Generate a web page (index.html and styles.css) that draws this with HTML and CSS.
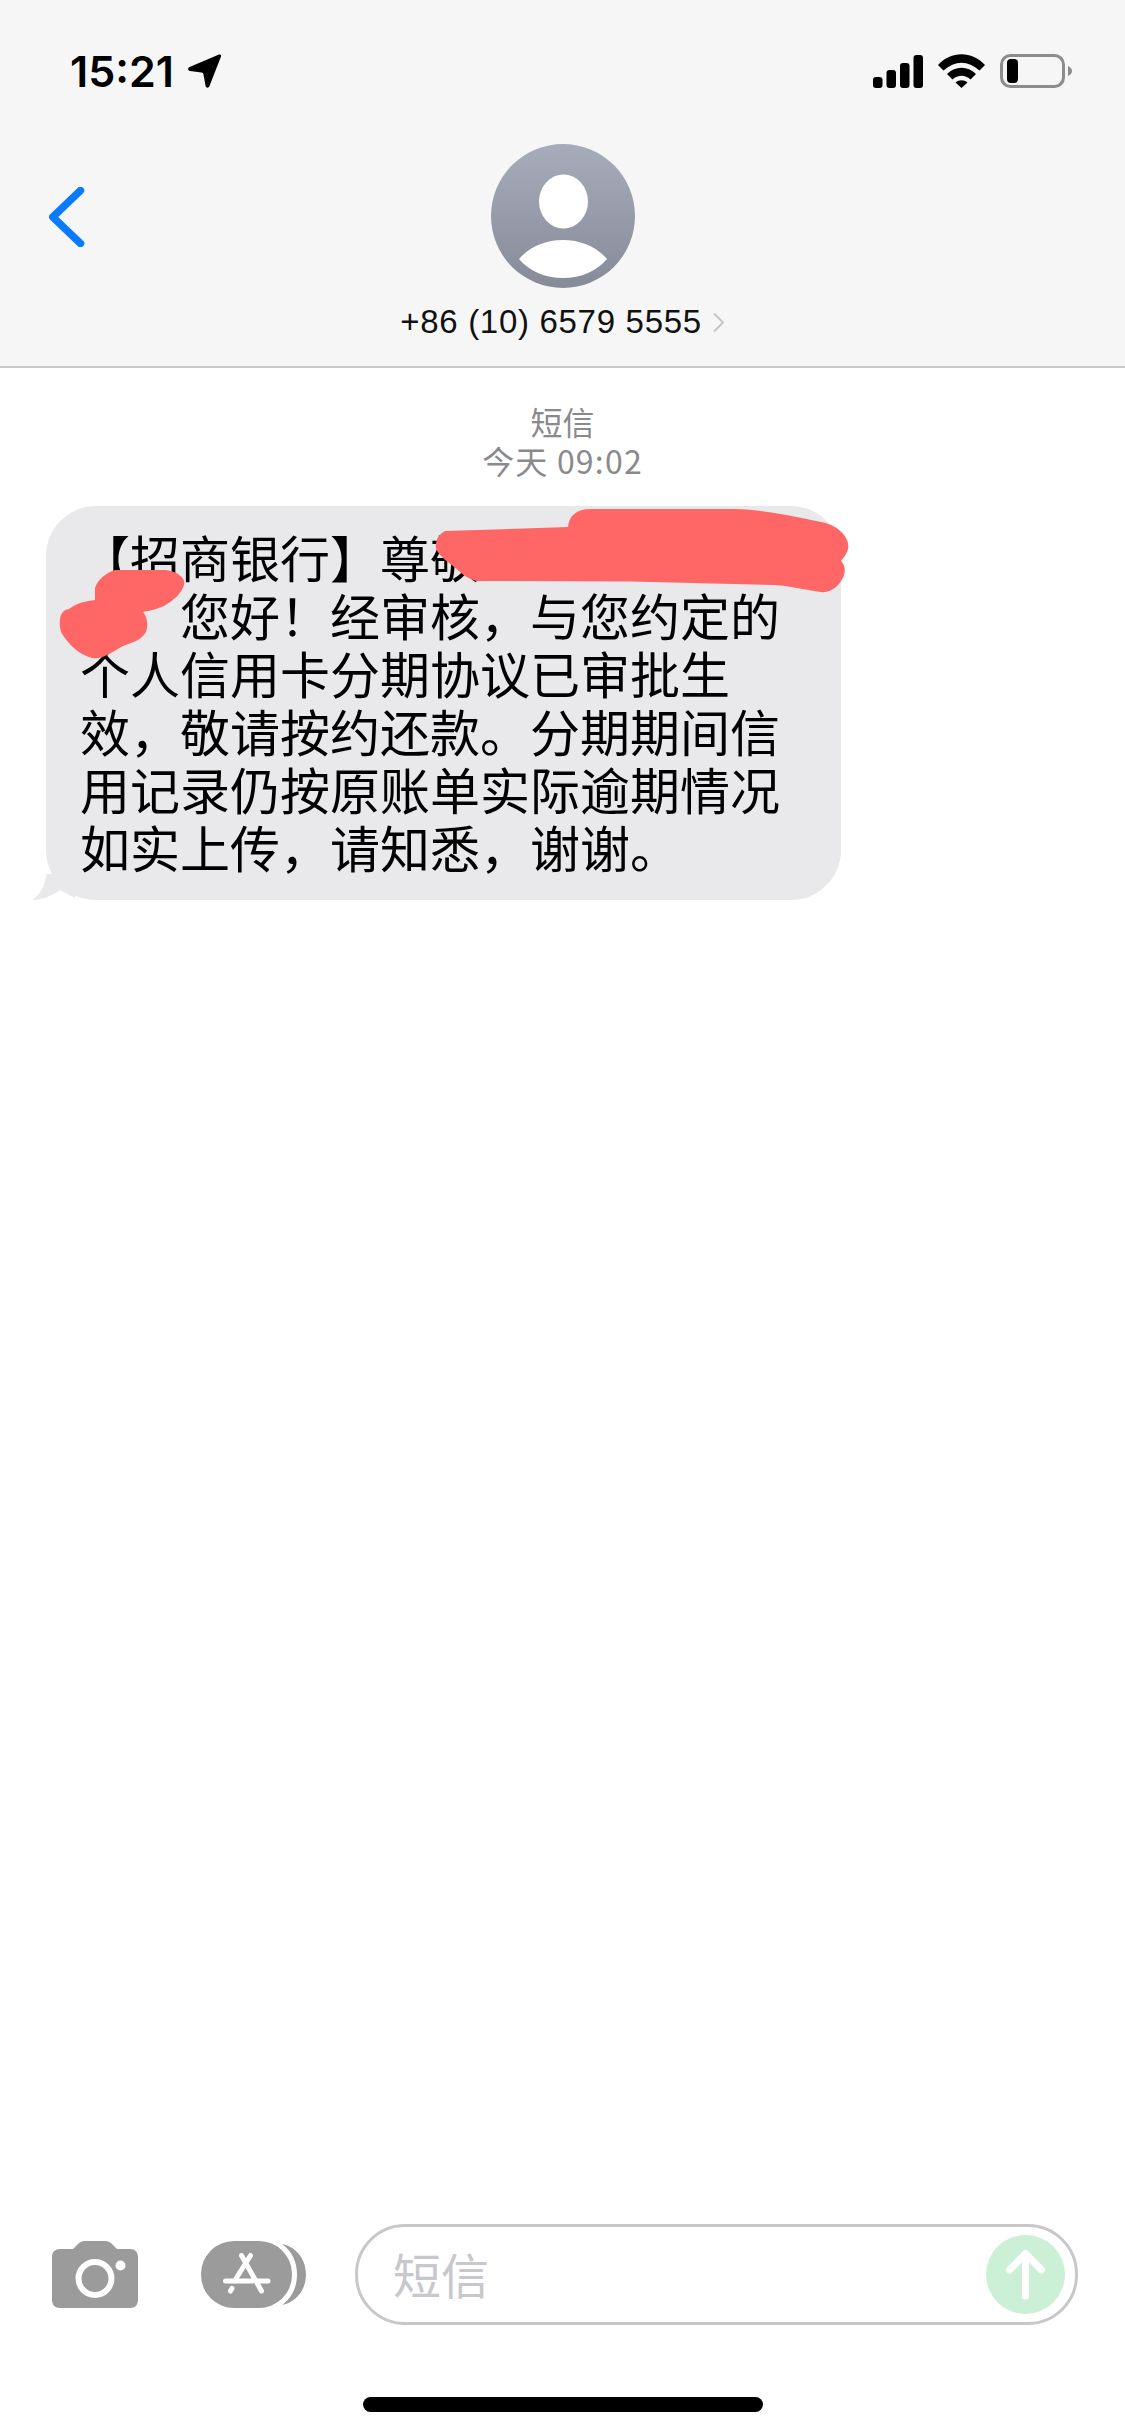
FILE: index.html
```html
<!DOCTYPE html>
<html lang="zh-CN">
<head>
<meta charset="utf-8">
<title>短信</title>
<link rel="stylesheet" href="styles.css">
</head>
<body>
<div class="screen">
  <header class="header">
    <div class="status">
      <div class="status-left">
        <span class="time">15:21</span>
        <svg class="ico-loc" width="34" height="34" viewBox="0 0 34 34"><path d="M31 .5C32.5 0 33.5 1.2 33 2.5L21.5 32C20.8 34.2 18 34.2 17.6 32L15.5 20.5C15.3 19.4 14.7 18.8 13.5 18.6L2 17C-.3 16.5-.4 13.8 1.6 13Z"/></svg>
      </div>
      <div class="status-right">
        <svg width="50" height="33" viewBox="0 0 50 33"><rect x="0" y="22" width="9.5" height="11" rx="3"/><rect x="13.5" y="15" width="9.5" height="18" rx="3"/><rect x="27" y="8" width="9.5" height="25" rx="3"/><rect x="40.5" y="0" width="9.5" height="33" rx="3"/></svg>
        <svg width="47" height="34" viewBox="0 0 47 34"><path d="M0 11C13-3.5 34-3.5 47 11L41.5 16.5C30 6 17 6 5.5 16.5Z"/><path d="M9 20C17.5 11.5 29.5 11.5 38 20L32.5 25.5C27 20.5 20 20.5 14.5 25.5Z"/><path d="M17.5 28.5C21 25.5 26 25.5 29.5 28.5L23.5 34Z"/></svg>
        <svg width="72" height="34" viewBox="0 0 72 34"><rect class="bat-shell" x="1.5" y="1.5" width="62" height="31" rx="9"/><rect x="7" y="5" width="11" height="24" rx="4"/><path class="bat-nub" d="M68 12C70.5 13 72 15 72 17S70.5 21 68 22Z"/></svg>
      </div>
    </div>
    <div class="nav">
      <svg class="back" width="36" height="60" viewBox="0 0 36 60"><path d="M31.500 3.500L3.800 30L31.500 56.500"/></svg>
      <div class="contact">
        <svg class="avatar" width="144" height="144" viewBox="0 0 144 144">
          <defs><linearGradient id="av" x1="0" y1="0" x2="0" y2="1"><stop offset="0" stop-color="#a7acbb"/><stop offset="1" stop-color="#878b98"/></linearGradient></defs>
          <circle cx="72" cy="72" r="72" fill="url(#av)"/>
          <ellipse class="white" cx="72.500" cy="57.500" rx="24.500" ry="27"/>
          <path class="white" d="M28 115C38 103 54 96 72 96S106 103 116 115C106 127 90 134 72 134S38 127 28 115Z"/>
        </svg>
        <div class="phone">
          <span>+86 (10) 6579 5555</span>
          <svg class="chev" width="13" height="21" viewBox="0 0 13 21"><path d="M2 1.500L11 10.500L2 19.500"/></svg>
        </div>
      </div>
    </div>
  </header>

  <main class="thread">
    <div class="meta">
      <div>短信</div>
      <div class="meta-time">今天 09:02</div>
    </div>
    <div class="bubble">
      <svg class="tail" width="50" height="26" viewBox="0 0 50 26"><path d="M14 0C14 11 8 21 0 26C10 26 20 22 28 16L43 24L50 0Z"/></svg>
      【招商银行】尊敬<br><span class="hidden-name"></span>您好！经审核，与您约定的<br>个人信用卡分期协议已审批生<br>效，敬请按约还款。分期期间信<br>用记录仍按原账单实际逾期情况<br>如实上传，请知悉，谢谢。
      <svg class="redact" width="795" height="160" viewBox="0 0 795 160">
        <path d="M399 25L522 21C523 10 530 3 545 3L689 3C720 4 746 10 780 17C798 23 804 36 802 43C800 50 796 53 795 55C800 60 800 68 795 75C790 84 780 87 775 86C760 84 745 80 729 79L585 75.500L430 75C424 73 418 70 413 65C405 58 392 50 390 42C389 35 393 28 399 25Z"/>
        <path d="M49 82C52 73 60 67 69 64L120 64C134 66 140 74 138 79C135 88 128 94 118 100C108 104 102 105 97 106C102 112 102 120 100 126C95 134 88 136 77 140C66 146 56 154 46 152C32 148 22 138 15 126C12 114 14 104 23 103C32 96 42 95 49 94Z"/>
      </svg>
    </div>
  </main>

  <footer class="footer">
    <div class="composer">
      <svg class="ico-camera" width="86" height="67" viewBox="0 0 86 67">
        <path class="gray" d="M8 8H21L26 3C28 1 30 0 33 0H53C56 0 58 1 60 3L65 8H78C83 8 86 11 86 16V59C86 64 83 67 78 67H8C3 67 0 64 0 59V16C0 11 3 8 8 8Z"/>
        <circle class="ring" cx="43" cy="37.500" r="16.500"/>
        <circle class="white" cx="68.500" cy="24.500" r="5"/>
      </svg>
      <svg class="ico-apps" width="105" height="67" viewBox="0 0 105 67">
        <path class="gray" d="M81 3C96 6 105 19 105 33.500S96 61 81 64C91 57 96 46 96 33.500S91 10 81 3Z"/>
        <rect class="gray" x="0" y="0" width="91" height="67" rx="33"/>
        <path class="glyph" d="M40.500 14.500L60.500 50M49.500 14.500L33.500 40M24.500 40H51M56.500 40H67M31 47.500L29.500 50"/>
      </svg>
      <div class="field">
        <span class="placeholder">短信</span>
        <svg class="send" width="79" height="79" viewBox="0 0 79 79"><circle class="send-bg" cx="39.500" cy="39.500" r="39.500"/><path class="send-arrow" d="M39.500 61V19M23.500 35L39.500 18.500L55.500 35"/></svg>
      </div>
    </div>
    <div class="home-row"><div class="home-bar"></div></div>
  </footer>
</div>
</body>
</html>
```

FILE: styles.css
```css
* { box-sizing: border-box; }
html, body { margin: 0; padding: 0; background: #fff; }
.screen {
  width: 1125px;
  height: 2435px;
  display: flex;
  flex-direction: column;
  overflow: hidden;
  font-family: "Noto Sans CJK SC", "Liberation Sans", sans-serif;
  color: #000;
}
.header {
  height: 368px;
  background: #f6f6f6;
  border-bottom: 2px solid #c9c9c9;
  padding-top: 45px;
}
.status {
  height: 52px;
  padding: 0 53px 0 70px;
  display: flex;
  justify-content: space-between;
  align-items: center;
}
.status-left { display: flex; align-items: center; gap: 14px; }
.time {
  font-family: Inter, "Liberation Sans", sans-serif;
  font-weight: 600;
  font-size: 43px;
  line-height: 52px;
}
.status-right { display: flex; align-items: center; gap: 15px; }
.bat-shell { fill: none; stroke: #8c8c8c; stroke-width: 3; }
.bat-nub { fill: #8c8c8c; }
.nav {
  margin-top: 47px;
  display: grid;
  grid-template-columns: 1fr auto 1fr;
  padding-left: 49px;
}
.back {
  margin-top: 43px;
  fill: none;
  stroke: #0a7aff;
  stroke-width: 7.500;
  stroke-linecap: round;
  stroke-linejoin: round;
}
.contact { display: flex; flex-direction: column; align-items: center; margin-left: -49px; }
.avatar { display: block; }
.white { fill: #fff; }
.phone {
  margin-top: 14px;
  display: flex;
  align-items: center;
  gap: 10px;
  font-family: "Liberation Sans", sans-serif;
  font-size: 33px;
  line-height: 40px;
  letter-spacing: 0.7px;
  color: #111;
}
.chev { fill: none; stroke: #c4c4c6; stroke-width: 2; }

.thread { flex: 1; padding-top: 34px; }
.meta {
  text-align: center;
  font-size: 32px;
  line-height: 39px;
  color: #8a8a8e;
}
.meta-time { letter-spacing: 1.2px; }
.bubble {
  position: relative;
  margin: 26px 0 0 46px;
  width: 795px;
  height: 394px;
  padding: 21px 0 0 34px;
  background: #e9e9eb;
  border-radius: 50px;
  font-size: 50px;
  line-height: 58px;
  color: #000;
  white-space: nowrap;
}
.hidden-name { display: inline-block; width: 100px; }
.tail { position: absolute; left: -14px; bottom: 0; fill: #e9e9eb; }
.redact { position: absolute; left: 0; top: 0; fill: #ff6666; overflow: visible; }

.footer { display: flex; flex-direction: column; padding-bottom: 23px; }
.composer { display: flex; align-items: center; padding-left: 52px; }
.ico-camera { margin-right: 63px; flex: none; }
.ico-apps { margin-right: 49px; flex: none; }
.gray { fill: #9b9b9b; }
.ring { fill: none; stroke: #fff; stroke-width: 6; }
.glyph { fill: none; stroke: #fff; stroke-width: 5; stroke-linecap: round; }
.field {
  width: 723px;
  height: 101px;
  border: 3px solid #c8c8c8;
  border-radius: 50px;
  padding: 0 10px 0 35px;
  display: flex;
  justify-content: space-between;
  align-items: center;
}
.placeholder { font-size: 48px; line-height: 60px; padding-bottom: 4px; box-sizing: content-box; color: #c7c7cc; }
.send-bg { fill: #ccf0d5; }
.send-arrow { fill: none; stroke: #fff; stroke-width: 7; stroke-linecap: round; stroke-linejoin: round; }
.home-row { margin-top: 72px; display: flex; justify-content: center; }
.home-bar { width: 400px; height: 15px; border-radius: 8px; background: #000; }
```
